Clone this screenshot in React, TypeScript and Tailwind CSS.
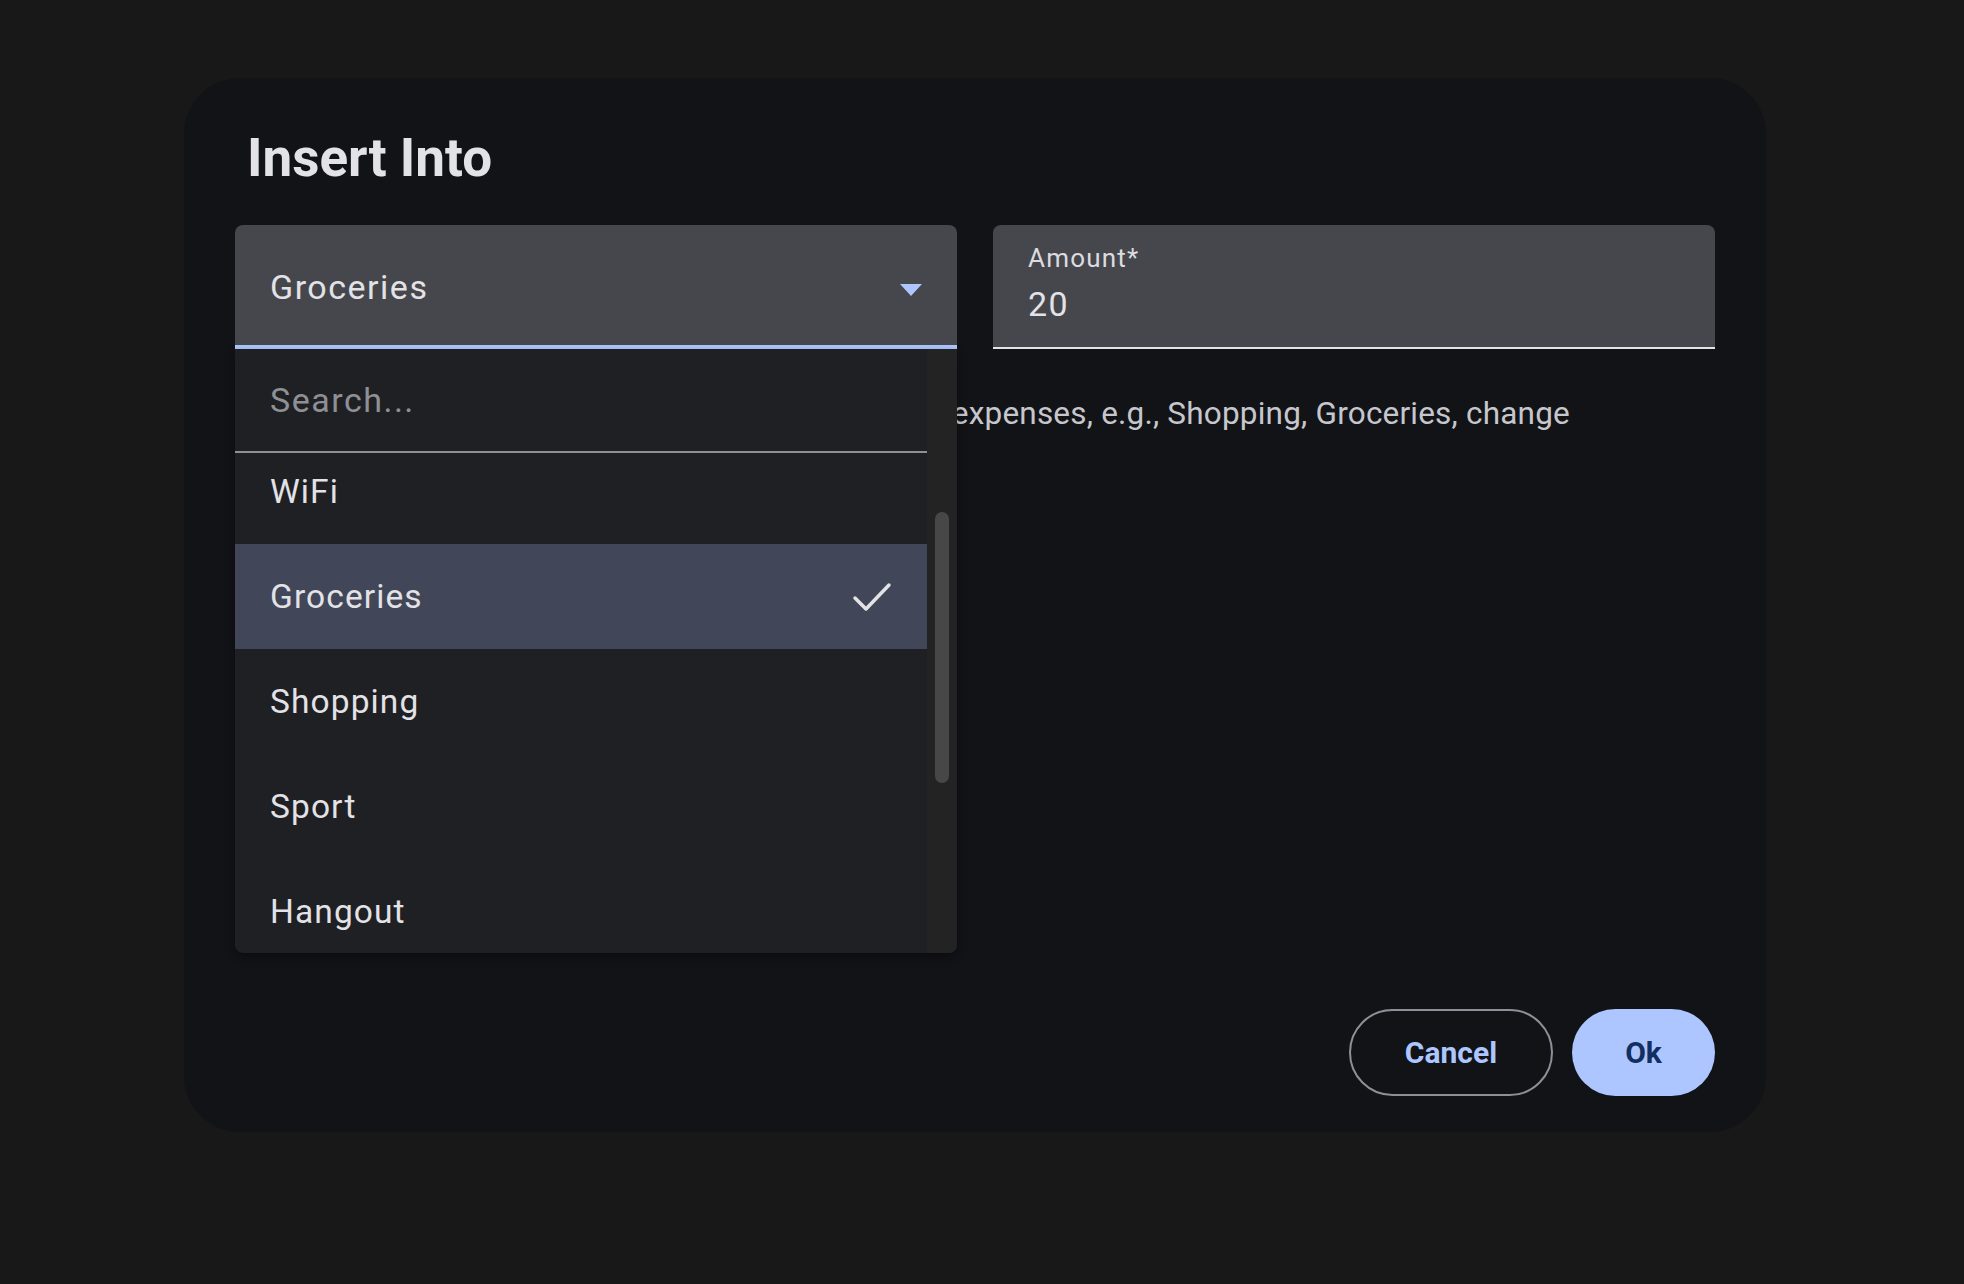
import React from 'react';

const categories = ['WiFi', 'Groceries', 'Shopping', 'Sport', 'Hangout'];
const selected = 'Groceries';

function CheckMark() {
  return (
    <svg width="40" height="30" viewBox="0 0 40 30" fill="none">
      <polyline points="3,16 14,27 37,3" stroke="#e3e2e6" strokeWidth="3.5" strokeLinecap="round" strokeLinejoin="round" />
    </svg>
  );
}

function Caret() {
  return (
    <svg width="22" height="12" viewBox="0 0 22 12" className="mt-[6px]">
      <polygon points="0,0 22,0 11,12" fill="#adc6ff" />
    </svg>
  );
}

export default function App() {
  return (
    <div className="min-h-screen bg-[#181818] pt-[78px] pl-[184px] font-[family-name:Roboto,sans-serif]">
      <div className="flex h-[1054px] w-[1582px] flex-col rounded-[56px] bg-[#121317] px-[51px] pt-[48px] pb-[36px]">
        <h2 className="pl-[12px] text-[53px] leading-[64px] font-bold text-[#e3e2e6]">Insert Into</h2>

        <div className="relative mt-[35px] flex-1">
          {/* Fields row */}
          <div className="flex justify-between">
            <div className="flex h-[124px] w-[722px] items-center justify-between rounded-t-[8px] border-b-4 border-[#adc6ff] bg-[#46474c] pt-[4px] pr-[35px] pl-[35px]">
              <span className="text-[34px] leading-[40px] tracking-[1.5px] text-[#e3e2e6]">{selected}</span>
              <Caret />
            </div>
            <div className="h-[124px] w-[722px] rounded-t-[8px] border-b-2 border-[#e3e2e6] bg-[#46474c] pt-[17px] pl-[35px]">
              <p className="text-[26px] leading-[32px] tracking-[1.2px] text-[#dcdce0]">Amount*</p>
              <p className="mt-[10px] text-[34px] leading-[40px] tracking-[1.5px] text-[#e3e2e6]">20</p>
            </div>
          </div>

          {/* Supporting text */}
          <p className="mt-[45px] pl-[48px] text-[31.5px] leading-[40px] tracking-[0.2px] text-[#c6c7cc]">
            Categories help you organize and track all your expenses, e.g., Shopping, Groceries, change categories anytime.
          </p>

          {/* Open dropdown menu */}
          <div className="absolute top-[124px] left-0 flex h-[604px] w-[722px] overflow-hidden rounded-b-[8px] bg-[#1f2023] shadow-[0_4px_10px_rgba(0,0,0,0.35)]">
            <div className="flex w-[692px] flex-col">
              <div className="flex h-[104px] shrink-0 items-center border-b-2 border-[#909094] pl-[35px]">
                <input
                  readOnly
                  placeholder="Search..."
                  className="w-full bg-transparent text-[34px] leading-[40px] tracking-[1.5px] text-[#e3e2e6] outline-none placeholder:text-[#8f9096]"
                />
              </div>
              <div className="flex-1 overflow-hidden">
                <div className="-mt-[14px]">
                  {categories.map((c) => (
                    <div
                      key={c}
                      className={`flex h-[105px] items-center justify-between pr-[35px] pl-[35px] ${c === selected ? 'bg-[#414759]' : ''}`}
                    >
                      <span className="text-[33.5px] leading-[40px] tracking-[1.1px] text-[#e3e2e6]">{c}</span>
                      {c === selected && <CheckMark />}
                    </div>
                  ))}
                </div>
              </div>
            </div>
            <div className="w-[30px] bg-[#232324] px-[8px] pt-[163px]">
              <div className="h-[271px] rounded-full bg-[#474747]" />
            </div>
          </div>
        </div>

        {/* Actions */}
        <div className="flex justify-end gap-[19px]">
          <button className="h-[87px] w-[204px] rounded-full border-2 border-[#8e9099] text-[30px] font-bold text-[#adc6ff]">
            Cancel
          </button>
          <button className="h-[87px] w-[143px] rounded-full bg-[#adc6ff] text-[30px] font-bold text-[#122f60]">
            Ok
          </button>
        </div>
      </div>
    </div>
  );
}
